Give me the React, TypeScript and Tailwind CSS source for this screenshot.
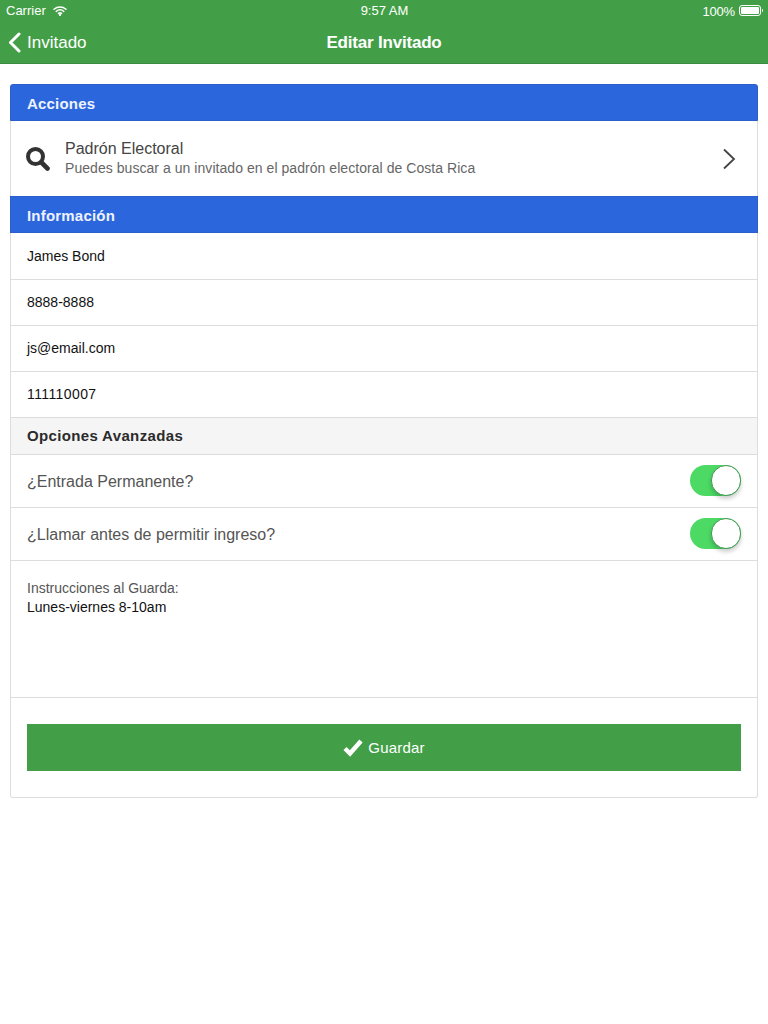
import React from "react";

const font = { fontFamily: '"Liberation Sans", Arial, sans-serif' };

function Toggle() {
  return (
    <div className="relative -mt-[1px] h-[31px] w-[51px] rounded-full bg-[#4cd964]">
      <div className="absolute right-0 top-0 h-[31px] w-[30px] rounded-full border border-[#3f9a52] bg-white shadow-[0_3px_4px_rgba(0,0,0,0.2)]" />
    </div>
  );
}

function Input({ value, wide }: { value: string; wide?: boolean }) {
  return (
    <div
      className={
        "flex h-[46px] items-center border-b border-[#dddddd] px-4 text-[14px] text-[#111111] " +
        (wide ? "tracking-[0.4px]" : "")
      }
    >
      {value}
    </div>
  );
}

function SwitchRow({ label }: { label: string }) {
  return (
    <div className="flex h-[53px] items-center justify-between border-b border-[#dddddd] pl-4 pr-4 text-[16px] text-[#555555]">
      <span className="pt-[1px]">{label}</span>
      <Toggle />
    </div>
  );
}

function Header({ label, rounded }: { label: string; rounded?: boolean }) {
  return (
    <div
      className={
        "-mx-px flex h-[37px] items-center border border-[#2a5fcc] bg-[#2c66dd] px-4 pt-[3px] text-[15px] font-bold tracking-[0.2px] text-[#eef3ff] " +
        (rounded ? "rounded-t-[3px]" : "")
      }
    >
      {label}
    </div>
  );
}

export default function App() {
  return (
    <div className="min-h-[1024px] bg-white" style={font}>
      <div className="h-[64px] border-b border-[#3a8a3f] bg-[#439f47] text-white">
        <div className="flex h-[21px] items-center justify-between pl-[6px] pr-[5px] text-[13px]">
          <div className="flex w-[200px] items-center gap-[7px]">
            <span>Carrier</span>
            <svg width="14" height="10" viewBox="0 0 14 10" fill="none" stroke="white" strokeWidth="1.4" strokeLinecap="round">
              <path d="M1 3.2C4.4 0.3 9.6 0.3 13 3.2" />
              <path d="M3.2 5.4C5.4 3.6 8.6 3.6 10.8 5.4" />
              <path d="M5.4 7.4C6.3 6.7 7.7 6.7 8.6 7.4" />
              <circle cx="7" cy="8.8" r="0.5" fill="white" />
            </svg>
          </div>
          <span>9:57 AM</span>
          <div className="flex w-[200px] items-center justify-end gap-[4px]">
            <span className="pt-[1px] text-[13px] leading-[15px] tracking-[-0.2px]">100%</span>
            <svg width="24" height="11" viewBox="0 0 24 11">
              <rect x="0.5" y="0.5" width="21" height="10" rx="2.5" fill="none" stroke="white" />
              <rect x="2" y="2" width="18" height="7" rx="1.2" fill="white" />
              <path d="M23 3.7C23.7 4 24 4.7 24 5.5C24 6.3 23.7 7 23 7.3Z" fill="white" />
            </svg>
          </div>
        </div>
        <div className="relative flex h-[42px] items-center justify-center pt-[1px]">
          <div className="absolute left-[8px] top-0 flex h-[42px] items-center gap-[6px] pt-[1px] text-[17px]">
            <svg width="13" height="21" viewBox="0 0 13 21" fill="none" stroke="white" strokeWidth="3" strokeLinecap="round" strokeLinejoin="round">
              <path d="M11 2L2.5 10.5L11 19" />
            </svg>
            <span>Invitado</span>
          </div>
          <span className="text-[17px] font-bold tracking-[-0.2px]">Editar Invitado</span>
        </div>
      </div>

      <div className="px-[10px] pt-[20px]">
        <div className="rounded-[3px] border border-[#dddddd] border-t-0">
          <Header label="Acciones" rounded />
          <div className="flex h-[75px] items-center pl-[15px] pr-[21px]">
            <svg width="24" height="24" viewBox="0 0 24 24" fill="none" className="mr-[15px] shrink-0 text-[#333333]">
              <circle cx="9.5" cy="9.5" r="7.5" stroke="currentColor" strokeWidth="4" />
              <path d="M15.5 15.5L21.5 21.5" stroke="currentColor" strokeWidth="4.6" strokeLinecap="round" />
            </svg>
            <div className="flex-1">
              <div className="text-[16px] leading-[20px] text-[#444444]">Padrón Electoral</div>
              <div className="text-[14px] leading-[19px] tracking-[0.05px] text-[#666666]">
                Puedes buscar a un invitado en el padrón electoral de Costa Rica
              </div>
            </div>
            <svg width="14" height="22" viewBox="0 0 14 22" fill="none" stroke="#444444" strokeWidth="1.8">
              <path d="M2 1.5L12 11L2 20.5" />
            </svg>
          </div>
          <Header label="Información" />
          <div className="h-[1px]" />
          <Input value="James Bond" />
          <Input value="8888-8888" />
          <Input value="js@email.com" />
          <Input value="111110007" wide />
          <div className="flex h-[37px] items-center border-b border-[#dddddd] bg-[#f5f5f5] px-4 pt-[1px] text-[15px] font-bold tracking-[0.35px] text-[#2b2b2b]">
            Opciones Avanzadas
          </div>
          <SwitchRow label="¿Entrada Permanente?" />
          <SwitchRow label="¿Llamar antes de permitir ingreso?" />
          <div className="h-[137px] border-b border-[#dddddd] px-4 pt-[18px] text-[14px] leading-[19px]">
            <div className="text-[#555555]">Instrucciones al Guarda:</div>
            <div className="text-[#111111]">Lunes-viernes 8-10am</div>
          </div>
          <div className="h-[99px] px-4 pt-[26px]">
            <div className="flex h-[47px] items-center justify-center gap-[5px] bg-[#439f47] text-[15px] tracking-[0.2px] text-white">
              <svg width="20" height="18" viewBox="0 0 20 18" fill="none" stroke="white" strokeWidth="4.4" strokeLinejoin="miter">
                <path d="M2 9.5L7 14.5L18 2" />
              </svg>
              <span className="pt-[1px]">Guardar</span>
            </div>
          </div>
        </div>
      </div>
    </div>
  );
}
